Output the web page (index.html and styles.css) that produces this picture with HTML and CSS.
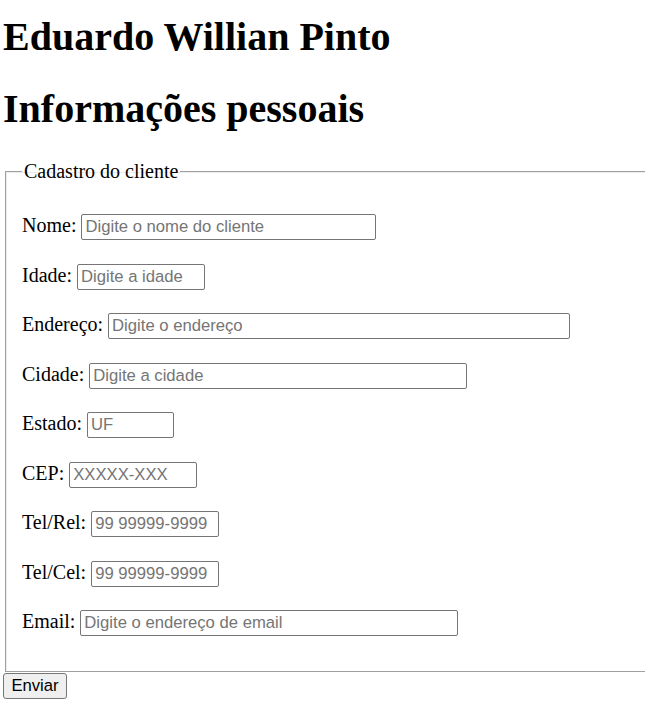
FILE: index.html
```html
<!DOCTYPE html>
<html lang="pt-BR">
<head>
<meta charset="utf-8">
<title>Cadastro</title>
<link rel="stylesheet" href="styles.css">
</head>
<body>
<h1 class="title">Eduardo Willian Pinto</h1>
<h1 class="title">Informações pessoais</h1>
<form class="form">
  <fieldset class="box">
    <legend class="box-legend">Cadastro do cliente</legend>
    <div class="rows">
      <div class="row"><label class="lbl" for="nome">Nome:</label><input class="field w-nome" id="nome" type="text" placeholder="Digite o nome do cliente"></div>
      <div class="row"><label class="lbl" for="idade">Idade:</label><input class="field w-small" id="idade" type="text" placeholder="Digite a idade"></div>
      <div class="row"><label class="lbl" for="end">Endereço:</label><input class="field w-end" id="end" type="text" placeholder="Digite o endereço"></div>
      <div class="row"><label class="lbl" for="cidade">Cidade:</label><input class="field w-mid" id="cidade" type="text" placeholder="Digite a cidade"></div>
      <div class="row"><label class="lbl" for="uf">Estado:</label><input class="field w-uf" id="uf" type="text" placeholder="UF"></div>
      <div class="row"><label class="lbl" for="cep">CEP:</label><input class="field w-small" id="cep" type="text" placeholder="XXXXX-XXX"></div>
      <div class="row"><label class="lbl" for="telr">Tel/Rel:</label><input class="field w-small" id="telr" type="text" placeholder="99 99999-9999"></div>
      <div class="row"><label class="lbl" for="telc">Tel/Cel:</label><input class="field w-small" id="telc" type="text" placeholder="99 99999-9999"></div>
      <div class="row"><label class="lbl" for="email">Email:</label><input class="field w-mid" id="email" type="text" placeholder="Digite o endereço de email"></div>
    </div>
  </fieldset>
  <button class="btn" type="submit">Enviar</button>
</form>
</body>
</html>
```

FILE: styles.css
```css
html {
  overflow: hidden;
  background: #ffffff;
}

body {
  margin: 0;
  padding: 0 0 0 3px;
  font-family: "Liberation Serif", "Times New Roman", serif;
  font-size: 20px;
  color: #000000;
}

.title {
  font-size: 40px;
  font-weight: bold;
  line-height: 45px;
  margin: 27px 0 0 0;
}

.title:first-child {
  margin-top: 14px;
}

.form {
  margin: 0;
}

.box {
  margin: 29px -30px 0 2px;
  padding: 31px 16px 35px 16px;
  border: 1px solid #a0a0a0;
  box-shadow: inset 1px 1px 0 #ececec;
  min-width: 0;
}

.box-legend {
  padding: 0 2px;
  font-size: 20px;
  line-height: 23px;
}

.rows {
  display: flex;
  flex-direction: column;
  gap: 23.5px;
}

.row {
  display: flex;
  align-items: baseline;
  gap: 5px;
}

.lbl {
  line-height: 23px;
}

.field {
  box-sizing: border-box;
  height: 26px;
  margin: 0;
  padding: 1px 3px;
  border: 1px solid #767676;
  border-radius: 2px;
  font-family: "Liberation Sans", Arial, sans-serif;
  font-size: 16.67px;
  color: #000000;
  background: #ffffff;
}

.field::placeholder {
  color: #757575;
  opacity: 1;
}

.w-nome { width: 295px; }
.w-small { width: 128px; }
.w-end { width: 462px; }
.w-mid { width: 378px; }
.w-uf { width: 87px; }

.btn {
  display: block;
  box-sizing: border-box;
  margin: 1px 0 0 0;
  width: 64px;
  height: 26px;
  padding: 1px 7px;
  border: 1px solid #767676;
  border-radius: 3px;
  background: #efefef;
  font-family: "Liberation Sans", Arial, sans-serif;
  font-size: 16.67px;
  color: #000000;
}
```
